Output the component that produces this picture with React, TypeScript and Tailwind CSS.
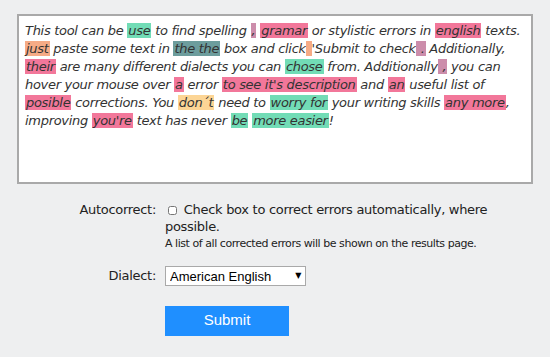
const green = 'bg-[#72dcb6]';
const pink = 'bg-[#f2779a]';
const mauve = 'bg-[#cc8dab]';
const orange = 'bg-[#f6ab86]';
const teal = 'bg-[#6d9d9d]';
const yellow = 'bg-[#fcd595]';

function Mark({ c, children }: { c: string; children: React.ReactNode }) {
  return <span className={`${c} px-px`}>{children}</span>;
}

export default function App() {
  return (
    <div
      className="w-[550px] h-[357px] bg-[#eeeff0] overflow-hidden"
      style={{ fontFamily: '"DejaVu Sans", Verdana, sans-serif' }}
    >
      <div className="pt-[14px] px-[17px]">
        <div className="h-[170px] bg-white border-2 border-[#a9a9a9] px-[6px] pt-[6px] text-[13px] leading-[18px] tracking-[-0.3px] italic text-[#333]">
          This tool can be <Mark c={green}>use</Mark> to find spelling <Mark c={mauve}>,</Mark>{' '}
          <Mark c={pink}>gramar</Mark> or stylistic errors in <Mark c={pink}>english</Mark> texts.{' '}
          <Mark c={orange}>just</Mark> paste some text in <Mark c={teal}>the the</Mark> box and click
          <Mark c={orange}>{'\u00a0'}</Mark>'Submit to check<Mark c={mauve}>{'\u00a0'}.</Mark> Additionally,{' '}
          <Mark c={pink}>their</Mark> are many different dialects you can <Mark c={green}>chose</Mark> from.
          Additionally<Mark c={mauve}>{'\u00a0'},</Mark> you can hover your mouse over <Mark c={pink}>a</Mark> error{' '}
          <Mark c={pink}>to see it's description</Mark> and <Mark c={pink}>an</Mark> useful list of{' '}
          <Mark c={pink}>posible</Mark> corrections. You <Mark c={yellow}>don´t</Mark> need to{' '}
          <Mark c={green}>worry for</Mark> your writing skills <Mark c={pink}>any more</Mark>, improving{' '}
          <Mark c={pink}>you're</Mark> text has never <Mark c={green}>be</Mark> <Mark c={green}>more easier</Mark>!
        </div>
      </div>

      <div className="mt-[17px] grid grid-cols-[156px_1fr] gap-x-[9px] text-[13px] tracking-[-0.3px] text-[#222] pr-[40px]">
        <div className="text-right leading-[17px]">Autocorrect:</div>
        <div className="leading-[17px]">
          <input type="checkbox" className="w-[9px] h-[9px] mx-[3px] align-[-1px] accent-gray-400" />{' '}
          Check box to correct errors automatically, where possible.
          <div className="text-[11px] leading-[15px] mt-[1px] tracking-[-0.45px]">
            A list of all corrected errors will be shown on the results page.
          </div>
        </div>

        <div className="text-right mt-[15px] leading-[20px]">Dialect:</div>
        <div className="mt-[15px]">
          <div className="relative w-[141px]">
            <select
              className="appearance-none w-[141px] h-[20px] border border-[#a9a9a9] bg-white text-[13px] pl-[4px] text-black tracking-normal"
              style={{ fontFamily: '"Liberation Sans", Arial, sans-serif' }}
            >
              <option>American English</option>
            </select>
            <span className="absolute right-[5px] top-[4px] text-[8px] text-black pointer-events-none">▼</span>
          </div>
        </div>

        <div />
        <div className="mt-[19px]">
          <button
            className="w-[124px] h-[30px] bg-[#1f8fff] text-white text-[15px] tracking-normal"
            style={{ fontFamily: '"Liberation Sans", Arial, sans-serif' }}
          >
            Submit
          </button>
        </div>
      </div>
    </div>
  );
}
